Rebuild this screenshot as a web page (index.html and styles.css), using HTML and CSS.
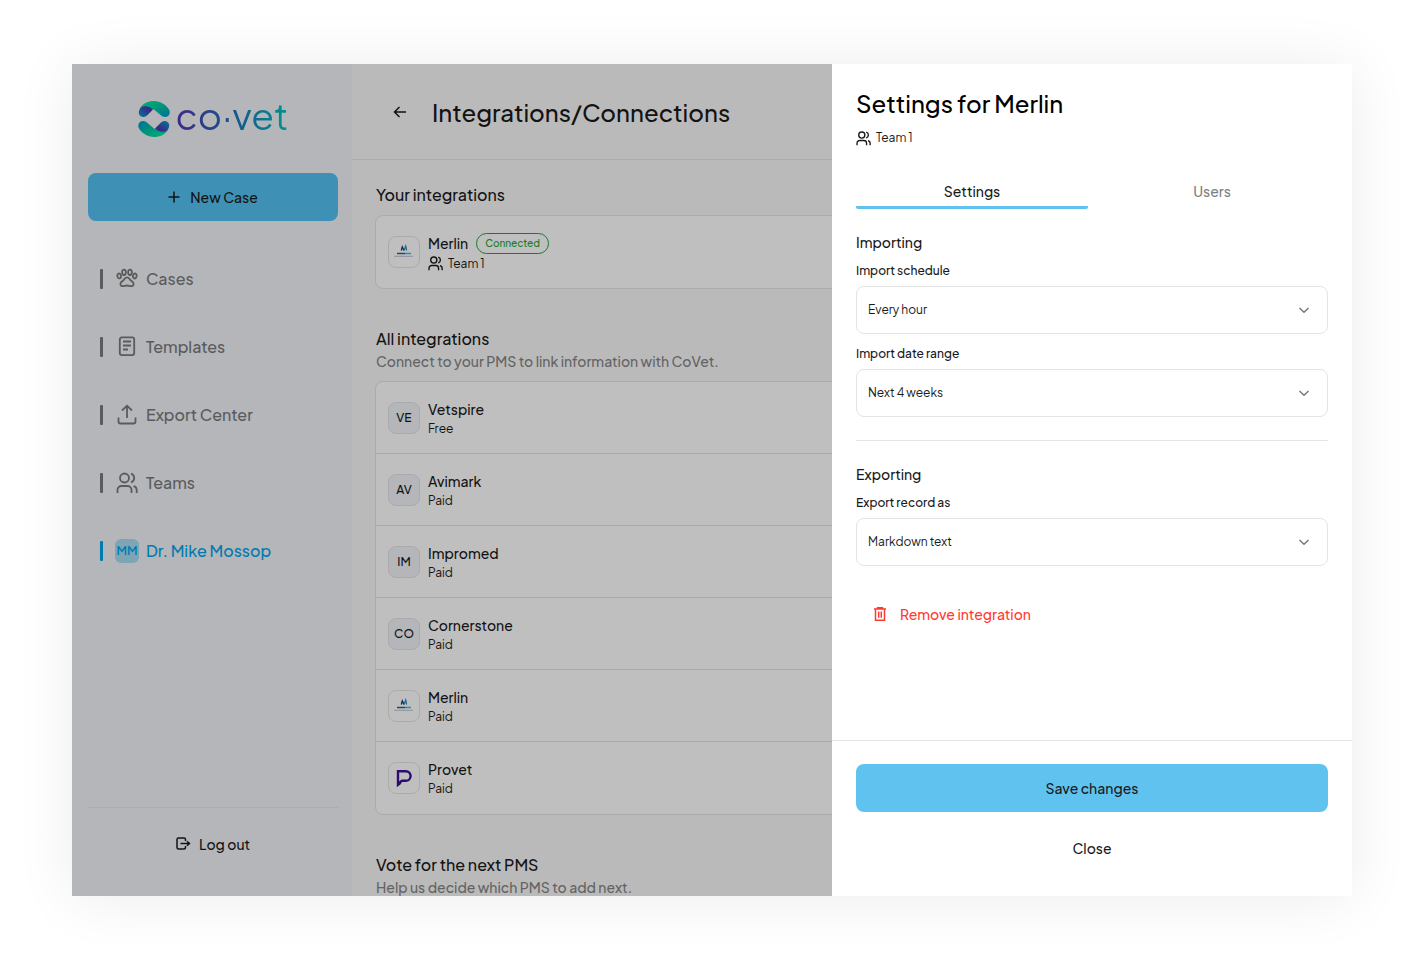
FILE: index.html
```html
<!DOCTYPE html>
<html lang="en">

<head>
    <meta charset="UTF-8">
    <meta name="viewport" content="width=device-width, initial-scale=1.0">
    <title>Integrations/Connections</title>
    <link rel="stylesheet" href="styles.css">
</head>

<body>
    <!-- shared icons -->
    <svg class="sprite" aria-hidden="true">
        <symbol id="icon-users" viewBox="0 0 22 22">
            <circle cx="8.5" cy="6" r="4.5" />
            <path d="M1.500 21V18a4 4 0 0 1 4-4h6a4 4 0 0 1 4 4v3M15 1.700a4.500 4.500 0 0 1 0 8.600M17.500 14.200a4 4 0 0 1 3.200 3.900V21" />
        </symbol>
        <symbol id="icon-chevron" viewBox="0 0 16 16">
            <path d="M3.500 6l4.500 4.300L12.500 6" />
        </symbol>
        <symbol id="logo-merlin" viewBox="0 0 30 30">
            <path d="M12.300 13.500l1-3.700 1.700 3.700" fill="none" stroke="#17356e" stroke-width="1.300" />
            <path d="M15 13.500l1.700-4.500.9 4.500" fill="none" stroke="#2a8fc4" stroke-width="1.300" />
            <path d="M8 16.500h8" stroke="#2b6193" stroke-width="1.500" />
            <path d="M16 16.500h6" stroke="#4fb0da" stroke-width="1.500" />
            <path d="M5 19.300h19" stroke="#a9b3c4" stroke-width=".8" />
        </symbol>
    </svg>

    <div class="window">
        <aside class="sidebar">
            <div class="logo">
                <svg width="32" height="36" viewBox="0 0 32 36">
                    <defs>
                        <linearGradient id="fold" x1="0" y1="1" x2="1" y2="0">
                            <stop offset="0" stop-color="#00a0d0" />
                            <stop offset="0.7" stop-color="#4b38b4" />
                        </linearGradient>
                        <linearGradient id="ring" x1="0" y1="0" x2="1" y2="1">
                            <stop offset="0.2" stop-color="#00e0a0" />
                            <stop offset="0.6" stop-color="#00bfa8" />
                            <stop offset="1" stop-color="#0096d0" />
                        </linearGradient>
                        <g id="half">
                            <path d="M2 7C5 2.500 10 0 16 0s13 4 15.500 9.500c.8 3-.5 6-4 6.500-2 .2-3.500-.8-5-2L16 8.500 8 6z" fill="url(#ring)" />
                            <path d="M2 7.500C4.500 4.500 10 4 15 8.500l-5 5c-1.500 1.600-3 2.700-5 2.500C1 15.500-.5 12 2 7.500z" fill="url(#fold)" />
                        </g>
                    </defs>
                    <use href="#half" />
                    <use href="#half" transform="rotate(180 16 18)" />
                </svg>
                <span class="logo-text">co·vet</span>
            </div>

            <button class="btn btn-new" type="button">
                <svg class="icon" width="12" height="12" viewBox="0 0 12 12"><path d="M6 .5v11M.5 6h11" /></svg>
                New Case
            </button>

            <nav class="menu">
                <a href="#cases">
                    <svg class="icon" width="22" height="22" viewBox="0 0 22 22">
                        <ellipse cx="8" cy="4.300" rx="1.900" ry="2.700" />
                        <ellipse cx="14" cy="4.300" rx="1.900" ry="2.700" />
                        <ellipse cx="3.200" cy="8" rx="1.800" ry="2.500" transform="rotate(-15 3.200 8)" />
                        <ellipse cx="18.800" cy="8" rx="1.800" ry="2.500" transform="rotate(15 18.800 8)" />
                        <path d="M11 9.300c-1.700 0-2.500 1.200-3.200 2.400-.8 1.300-3.400 2-3.400 4.200 0 1.700 1.300 2.400 2.600 2.300 1.300-.1 2.700-.7 4-.7s2.700.6 4 .7c1.300.1 2.600-.6 2.600-2.300 0-2.200-2.600-2.900-3.400-4.200-.7-1.200-1.500-2.400-3.200-2.400z" />
                    </svg>
                    Cases
                </a>
                <a href="#templates">
                    <svg class="icon" width="22" height="22" viewBox="0 0 22 22">
                        <rect x="3.800" y="1.300" width="14.400" height="17.800" rx="2" />
                        <path d="M7 5.500h8M7 9.500h8M7 13.500h5" />
                    </svg>
                    Templates
                </a>
                <a href="#export">
                    <svg class="icon" width="22" height="22" viewBox="0 0 22 22">
                        <path d="M11 14V2M6 6.500L11 1.700l5 4.800M2.500 13.500v4a2 2 0 0 0 2 2h13a2 2 0 0 0 2-2v-4" />
                    </svg>
                    Export Center
                </a>
                <a href="#teams">
                    <svg class="icon" width="22" height="22"><use href="#icon-users" /></svg>
                    Teams
                </a>
                <a class="active" href="#profile">
                    <span class="initials">MM</span>
                    Dr. Mike Mossop
                </a>
            </nav>

            <div class="sidebar-footer">
                <button class="btn" type="button">
                    <svg class="icon" width="15" height="14" viewBox="0 0 15 14">
                        <path d="M9.500 4V2.500A1.500 1.500 0 0 0 8 1H2.500A1.500 1.500 0 0 0 1 2.500v8A1.500 1.500 0 0 0 2.500 12H8a1.500 1.500 0 0 0 1.500-1.500V9M4.500 6.500H13M11 4.200l2.500 2.300L11 8.800" />
                    </svg>
                    Log out
                </button>
            </div>
        </aside>

        <main class="main">
            <header class="main-header">
                <a class="back" href="#back" aria-label="Back">
                    <svg class="icon" width="14" height="14" viewBox="0 0 14 14"><path d="M13 7H1.500M6.500 2l-5 5 5 5" /></svg>
                </a>
                <h1>Integrations/Connections</h1>
            </header>

            <div class="content">
                <section>
                    <h2>Your integrations</h2>
                    <ul class="card">
                        <li>
                            <span class="tile tile-logo"><svg width="30" height="30"><use href="#logo-merlin" /></svg></span>
                            <div>
                                <h3>Merlin <span class="badge">Connected</span></h3>
                                <p class="team"><svg class="icon" width="15" height="15"><use href="#icon-users" /></svg> Team 1</p>
                            </div>
                        </li>
                    </ul>
                </section>

                <section>
                    <h2>All integrations</h2>
                    <p class="hint">Connect to your PMS to link information with CoVet.</p>
                    <ul class="card">
                        <li>
                            <span class="tile">VE</span>
                            <div>
                                <h3>Vetspire</h3>
                                <p>Free</p>
                            </div>
                        </li>
                        <li>
                            <span class="tile">AV</span>
                            <div>
                                <h3>Avimark</h3>
                                <p>Paid</p>
                            </div>
                        </li>
                        <li>
                            <span class="tile">IM</span>
                            <div>
                                <h3>Impromed</h3>
                                <p>Paid</p>
                            </div>
                        </li>
                        <li>
                            <span class="tile">CO</span>
                            <div>
                                <h3>Cornerstone</h3>
                                <p>Paid</p>
                            </div>
                        </li>
                        <li>
                            <span class="tile tile-logo"><svg width="30" height="30"><use href="#logo-merlin" /></svg></span>
                            <div>
                                <h3>Merlin</h3>
                                <p>Paid</p>
                            </div>
                        </li>
                        <li>
                            <span class="tile tile-logo">
                                <svg width="30" height="30" viewBox="0 0 30 30">
                                    <path d="M9 8.200h7.800a4.800 4.800 0 0 1 0 9.600H13.500c-1.500 0-2.300 1.200-2.800 2.700L9 21.800z" fill="none" stroke="#3c0f98" stroke-width="2.400" />
                                </svg>
                            </span>
                            <div>
                                <h3>Provet</h3>
                                <p>Paid</p>
                            </div>
                        </li>
                    </ul>
                </section>

                <section>
                    <h2>Vote for the next PMS</h2>
                    <p class="hint">Help us decide which PMS to add next.</p>
                </section>
            </div>
        </main>

        <div class="overlay"></div>

        <form class="drawer">
            <div class="drawer-body">
                <h2>Settings for Merlin</h2>
                <p class="team"><svg class="icon" width="15" height="15"><use href="#icon-users" /></svg> Team 1</p>

                <div class="tabs" role="tablist">
                    <button class="selected" type="button" role="tab" aria-selected="true">Settings</button>
                    <button type="button" role="tab" aria-selected="false">Users</button>
                </div>

                <h3>Importing</h3>
                <div class="field">
                    <label for="schedule">Import schedule</label>
                    <div class="select">
                        <select id="schedule">
                            <option>Every hour</option>
                        </select>
                        <svg class="icon" width="16" height="16"><use href="#icon-chevron" /></svg>
                    </div>
                </div>
                <div class="field">
                    <label for="range">Import date range</label>
                    <div class="select">
                        <select id="range">
                            <option>Next 4 weeks</option>
                        </select>
                        <svg class="icon" width="16" height="16"><use href="#icon-chevron" /></svg>
                    </div>
                </div>

                <hr>

                <h3>Exporting</h3>
                <div class="field">
                    <label for="format">Export record as</label>
                    <div class="select">
                        <select id="format">
                            <option>Markdown text</option>
                        </select>
                        <svg class="icon" width="16" height="16"><use href="#icon-chevron" /></svg>
                    </div>
                </div>

                <button class="btn btn-remove" type="button">
                    <svg class="icon" width="16" height="16" viewBox="0 0 16 16">
                        <path d="M2 3h12M5.500 3V1.700h5V3M3.500 3v11.300h9V3M6.700 5.500v6.300M9.300 5.500v6.300" />
                    </svg>
                    Remove integration
                </button>
            </div>

            <div class="drawer-footer">
                <button class="btn btn-save" type="submit">Save changes</button>
                <button class="btn" type="button">Close</button>
            </div>
        </form>
    </div>
</body>

</html>
```
FILE: styles.css
```css
* {
    box-sizing: border-box;
}

body {
    margin: 0;
    padding: 64px 64px 72px 72px;
    height: 100vh;
    background-color: #fff;
    color: #1a1a1a;
    font-family: "Plus Jakarta Sans", Inter, sans-serif;
    font-size: 12px;
    line-height: 20px;
}

h1,
h2,
h3,
p,
ul {
    margin: 0;
    padding: 0;
    font-weight: 500;
}

p {
    font-weight: 400;
}

a {
    color: inherit;
    text-decoration: none;
}

button,
select {
    font: inherit;
    color: inherit;
    border: none;
    background: none;
    cursor: pointer;
}

.sprite {
    position: absolute;
    width: 0;
    height: 0;
}

.icon {
    flex: none;
    fill: none;
    stroke: currentColor;
    stroke-width: 1.5;
}

.window {
    position: relative;
    display: flex;
    height: 100%;
    overflow: hidden;
    background-color: #f9f9f9;
    box-shadow: 0 2px 56px rgba(0, 0, 0, 0.08);
}

.btn {
    display: flex;
    align-items: center;
    justify-content: center;
    width: 100%;
    height: 48px;
    border-radius: 8px;
    font-size: 14px;
    font-weight: 500;
}

/* sidebar */
.sidebar {
    display: flex;
    flex-direction: column;
    flex: none;
    width: 280px;
    padding: 0 14px 0 16px;
    background-color: #f1f3f9;
}

.logo {
    display: flex;
    align-items: center;
    justify-content: center;
    gap: 6px;
    height: 109px;
}

.logo-text {
    padding-bottom: 8px;
    font-family: "Plus Jakarta Sans", Lato, sans-serif;
    font-size: 37px;
    font-weight: 400;
    line-height: 44px;
    background: linear-gradient(90deg, #5038b4, #2070b8 50%, #00c4c0);
    background-clip: text;
    -webkit-background-clip: text;
    color: transparent;
}

.btn-new {
    flex: none;
    gap: 10px;
    background-color: #53c2f2;
}

.menu {
    padding: 24px 0 0 12px;
}

.menu a {
    display: flex;
    align-items: center;
    gap: 8px;
    height: 68px;
    font-size: 16px;
    font-weight: 500;
    color: #7a7a7a;
}

.menu a::before {
    content: "";
    width: 3px;
    height: 20px;
    margin-right: 5px;
    border-radius: 1px;
    background-color: currentColor;
}

.menu .icon {
    stroke-width: 1.8;
}

.menu .active {
    gap: 7px;
    color: #00a4eb;
}

.initials {
    width: 24px;
    border-radius: 6px;
    background-color: #a9dcf2;
    font-size: 12px;
    font-weight: 600;
    line-height: 24px;
    text-align: center;
}

.sidebar-footer {
    margin-top: auto;
    padding: 12px 0 28px;
    border-top: 1px solid #e4e6e9;
}

.sidebar-footer .btn {
    gap: 8px;
}

/* main column */
.main {
    flex: 1;
    min-width: 0;
}

.main-header {
    display: flex;
    align-items: center;
    gap: 24px;
    height: 96px;
    padding-left: 40px;
    border-bottom: 1px solid #e4e4e4;
}

.back {
    display: flex;
    padding: 0 1px;
}

h1 {
    font-size: 24px;
    line-height: 32px;
}

.content {
    padding: 23px 24px;
}

.content section {
    margin-bottom: 38px;
}

.content h2 {
    font-size: 16px;
    line-height: 24px;
}

.hint {
    padding-bottom: 2px;
    color: #858585;
    font-size: 14px;
    font-weight: 500;
}

.card {
    margin: 8px 0 0 -1px;
    border: 1px solid #e4e4e4;
    border-radius: 8px;
    background-color: #fff;
    list-style: none;
}

.card li {
    display: flex;
    align-items: center;
    gap: 8px;
    height: 72px;
    padding: 0 12px;
    border-bottom: 1px solid #e4e4e4;
}

.card li:last-child {
    border-bottom: none;
}

.card li div {
    padding-top: 2px;
}

.card h3 {
    display: flex;
    align-items: center;
    gap: 8px;
    font-size: 14px;
}

.tile {
    display: flex;
    align-items: center;
    justify-content: center;
    width: 32px;
    height: 32px;
    border: 1px solid #e4e4e4;
    border-radius: 8px;
    background-color: #f1f3f9;
    font-weight: 500;
}

.tile-logo {
    background-color: #fff;
}

.badge {
    padding: 0 8px;
    border: 1px solid #1ca82c;
    border-radius: 12px;
    color: #1ca82c;
    font-size: 10px;
    font-weight: 500;
    line-height: 19px;
}

.team {
    display: flex;
    align-items: center;
    gap: 5px;
}

.team .icon {
    stroke-width: 2;
}

/* drawer */
.overlay {
    position: absolute;
    inset: 0;
    background-color: rgba(0, 0, 0, 0.25);
}

.drawer {
    position: absolute;
    top: 0;
    right: 0;
    bottom: 0;
    display: flex;
    flex-direction: column;
    width: 520px;
    background-color: #fff;
}

.drawer-body {
    flex: 1;
    padding: 23px 24px;
}

.drawer h2 {
    margin-bottom: 9px;
    color: #000;
    font-size: 24px;
    line-height: 32px;
}

.drawer h3 {
    font-size: 14px;
    margin-bottom: 9px;
}

.tabs {
    display: grid;
    grid-template-columns: 1fr 1fr;
    gap: 8px;
    margin: 24px 0 23px;
}

.tabs button {
    padding: 9px 0 5px;
    border-bottom: 3px solid transparent;
    color: #808080;
    font-size: 14px;
    font-weight: 500;
}

.tabs .selected {
    border-color: #60c2ef;
    border-radius: 2px;
    color: #1a1a1a;
}

.field {
    margin-bottom: 10px;
}

.field label {
    display: block;
    margin-bottom: 5px;
    font-weight: 500;
}

.select {
    display: grid;
    align-items: center;
}

.select select,
.select svg {
    grid-area: 1 / 1;
}

.select select {
    width: 100%;
    height: 48px;
    padding: 0 40px 0 11px;
    border: 1px solid #e4e4e4;
    border-radius: 8px;
    appearance: none;
}

.select svg {
    justify-self: end;
    margin-right: 16px;
    color: #7a7a7a;
    pointer-events: none;
}

hr {
    margin: 23px 0;
    border: none;
    border-top: 1px solid #e4e4e4;
}

.btn-remove {
    gap: 12px;
    width: auto;
    margin-top: 24px;
    padding: 0 16px;
    color: #ff3b30;
}

.drawer-footer {
    display: grid;
    gap: 12px;
    padding: 23px 24px 24px;
    border-top: 1px solid #e4e4e4;
}

.btn-save {
    background-color: #60c2ef;
}
```
